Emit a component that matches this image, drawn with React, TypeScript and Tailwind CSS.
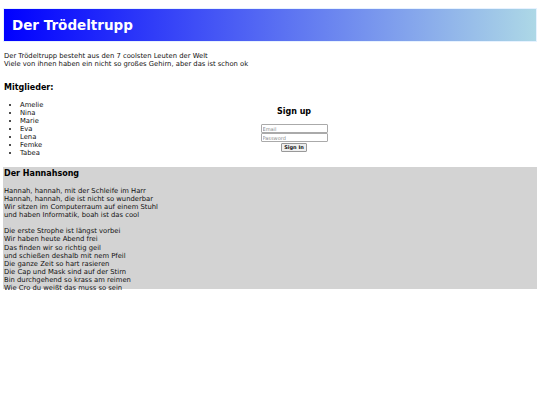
const members = ['Amelie', 'Nina', 'Marie', 'Eva', 'Lena', 'Femke', 'Tabea'];

const strophe1 = [
  'Hannah, hannah, mit der Schleife im Harr',
  'Hannah, hannah, die ist nicht so wunderbar',
  'Wir sitzen im Computerraum auf einem Stuhl',
  'und haben Informatik, boah ist das cool',
];

const strophe2 = [
  'Die erste Strophe ist längst vorbei',
  'Wir haben heute Abend frei',
  'Das finden wir so richtig geil',
  'und schießen deshalb mit nem Pfeil',
  'Die ganze Zeit so hart rasieren',
  'Die Cap und Mask sind auf der Stirn',
  'Bin durchgehend so krass am reimen',
  'Wie Cro du weißt das muss so sein',
];

export default function App() {
  return (
    <div className="min-h-[405px] bg-white px-[3px] pt-[8px] text-[6.8px] text-[#111]" style={{ fontFamily: '"DejaVu Sans", Verdana, sans-serif' }}>
      <header className="h-[34px] flex items-center pl-[8px] bg-[linear-gradient(to_right,#0000ff,#add8e6)] border border-[#e6f2ff]">
        <h1 className="text-[13.5px] font-bold text-white">Der Trödeltrupp</h1>
      </header>

      <div className="mt-[10px] pl-[1px] leading-[8px]">
        <p>Der Trödeltrupp besteht aus den 7 coolsten Leuten der Welt</p>
        <p>Viele von ihnen haben ein nicht so großes Gehirn, aber das ist schon ok</p>
      </div>

      <div className="flex mt-[14px]">
        <div className="w-[220px] pl-[1px]">
          <h2 className="text-[8px] font-bold text-black">Mitglieder:</h2>
          <ul className="mt-[7px] pl-[16px] list-disc leading-[8px]">
            {members.map((m) => (
              <li key={m}>{m}</li>
            ))}
          </ul>
        </div>
        <div className="w-[142px] flex flex-col items-center pt-[24px]">
          <h2 className="text-[8px] font-bold text-black">Sign up</h2>
          <form className="mt-[6px] flex flex-col items-center" onSubmit={(e) => e.preventDefault()}>
            <input
              type="email"
              placeholder="Email"
              className="w-[67px] h-[9px] px-[1px] text-[5px] border border-[#aaa] rounded-[1px] placeholder:text-[#888]"
            />
            <input
              type="password"
              placeholder="Password"
              className="w-[67px] h-[9px] px-[1px] text-[5px] border border-[#aaa] rounded-[1px] placeholder:text-[#888]"
            />
            <button className="mt-[1px] h-[9px] px-[2px] text-[5px] font-bold leading-none bg-[#efefef] border border-[#999] rounded-[1px]">
              Sign In
            </button>
          </form>
        </div>
      </div>

      <section className="mt-[10px] h-[122px] bg-[#d3d3d3] pl-[1px] pt-[1px]">
        <h2 className="text-[8px] font-bold text-black">Der Hannahsong</h2>
        <div className="mt-[7px] leading-[8.1px]">
          {strophe1.map((l) => (
            <p key={l}>{l}</p>
          ))}
          <div className="h-[8px]" />
          {strophe2.map((l) => (
            <p key={l}>{l}</p>
          ))}
        </div>
      </section>
    </div>
  );
}
